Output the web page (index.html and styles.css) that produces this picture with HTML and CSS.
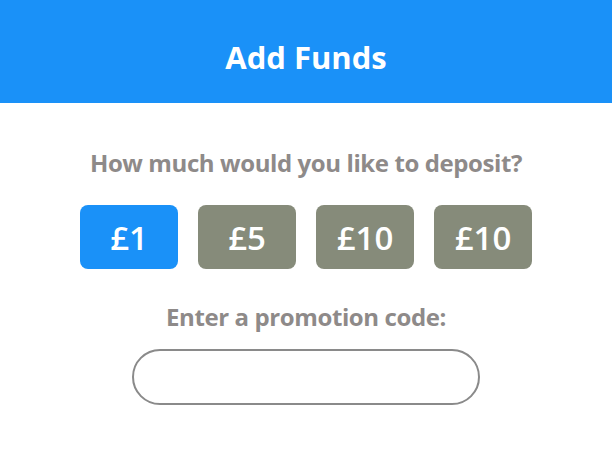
FILE: index.html
```html
<!DOCTYPE html>
<html lang="en">
<head>
    <meta charset="UTF-8">
    <meta name="viewport" content="width=device-width, initial-scale=1.0">
    <title>Add Funds</title>
    <link rel="stylesheet" href="styles.css">
</head>
<body>
    <header class="top-bar">
        <h1>Add Funds</h1>
    </header>

    <main class="content">
        <p class="label">How much would you like to deposit?</p>
        <div class="amounts">
            <button class="amount selected">£1</button>
            <button class="amount">£5</button>
            <button class="amount">£10</button>
            <button class="amount">£10</button>
        </div>
        <p class="label promo-label">Enter a promotion code:</p>
        <input type="text" class="promo-input">
    </main>
</body>
</html>
```

FILE: styles.css
```css
body {
    margin: 0;
    font-family: "Open Sans", "Liberation Sans", sans-serif;
    background-color: #fff;
}
.top-bar {
    background-color: #1a91f8;
    height: 103px;
    box-sizing: border-box;
    padding-top: 10px;
    display: flex;
    align-items: center;
    justify-content: center;
}
.top-bar h1 {
    margin: 0;
    color: #fff;
    font-size: 31px;
    font-weight: 700;
    letter-spacing: 0;
}
.content {
    display: flex;
    flex-direction: column;
    align-items: center;
}
.label {
    margin: 45px 0 0;
    color: #8e8a89;
    font-size: 24px;
    font-weight: 700;
    line-height: 30px;
    letter-spacing: -0.4px;
}
.amounts {
    display: flex;
    gap: 20px;
    margin-top: 27px;
}
.amount {
    width: 98px;
    height: 64px;
    border: none;
    border-radius: 8px;
    background-color: #868b7a;
    color: #fff;
    font-family: inherit;
    font-size: 33px;
    font-weight: 600;
    padding: 0;
}
.amount.selected {
    background-color: #1a91f8;
}
.promo-label {
    margin-top: 33px;
}
.promo-input {
    margin-top: 17px;
    width: 348px;
    height: 56px;
    box-sizing: border-box;
    border: 2px solid #8a8a8a;
    border-radius: 28px;
    background: #fff;
}
```
